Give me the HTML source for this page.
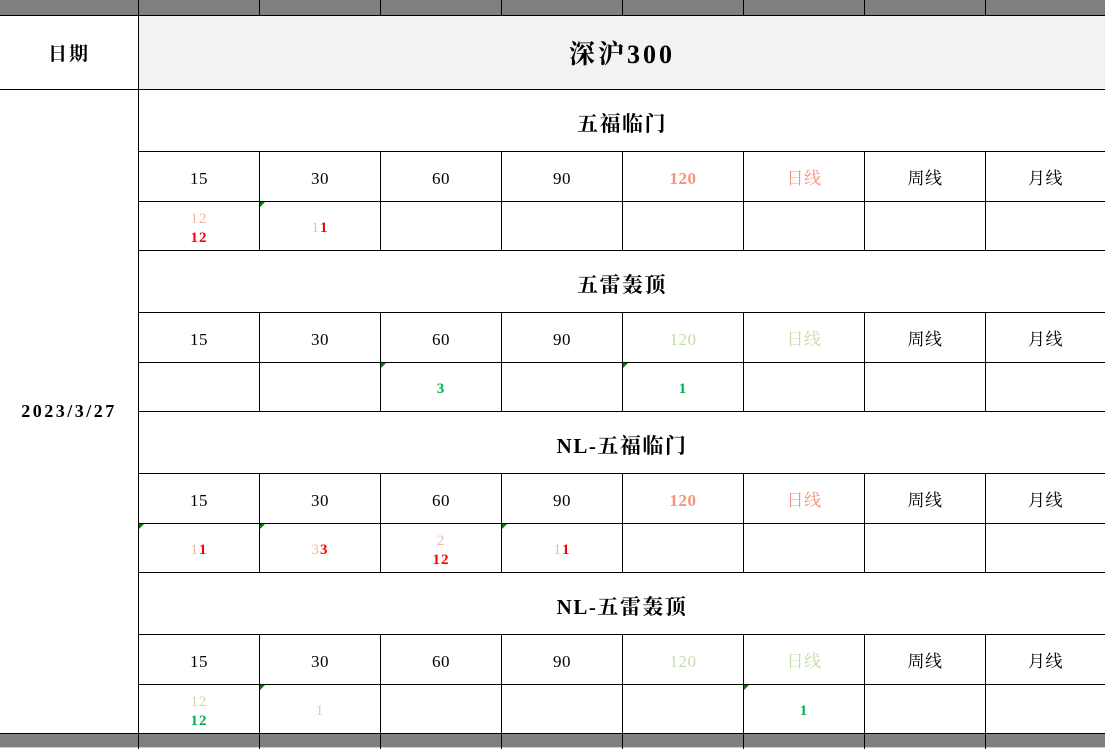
<!DOCTYPE html>
<html><head><meta charset="utf-8"><style>
*{margin:0;padding:0;box-sizing:border-box}
body{width:1105px;height:749px;background:#fff;position:relative;overflow:hidden;font-family:"Liberation Serif","Noto Serif CJK SC",serif;color:#000}
.h{position:absolute;height:1px;background:#000}
.v{position:absolute;width:1px;background:#000}
.c{position:absolute;display:flex;flex-direction:column;align-items:center;justify-content:center;text-align:center;line-height:1.25;padding-top:5px}
.lab{font-size:17px;letter-spacing:0.5px}
.val{font-size:15px;font-weight:bold;letter-spacing:1px}
.sec{font-size:21px;font-weight:bold;letter-spacing:1.5px;padding-top:8px}
.lr{color:#f8b4a0;font-weight:normal}
.r{color:#ff0000}
.sal{color:#f4937a}
.lg{color:#c5dca8;font-weight:normal}
.g{color:#00b050}
.tri{position:absolute;width:0;height:0;border-top:5px solid #007a00;border-right:5px solid transparent}
</style></head><body>
<div style="position:absolute;left:0;top:0;width:1105px;height:15px;background:#808080"></div>
<div style="position:absolute;left:0;top:733px;width:1105px;height:14px;background:#808080"></div>
<div style="position:absolute;left:139px;top:16px;width:966px;height:73px;background:#f2f2f2"></div>

<div class="h" style="left:0;top:15px;width:1105px"></div>
<div class="h" style="left:0;top:89px;width:1105px"></div>
<div class="h" style="left:138px;top:151px;width:967px"></div>
<div class="h" style="left:138px;top:201px;width:967px"></div>
<div class="h" style="left:138px;top:250px;width:967px"></div>
<div class="h" style="left:138px;top:312px;width:967px"></div>
<div class="h" style="left:138px;top:362px;width:967px"></div>
<div class="h" style="left:138px;top:411px;width:967px"></div>
<div class="h" style="left:138px;top:473px;width:967px"></div>
<div class="h" style="left:138px;top:523px;width:967px"></div>
<div class="h" style="left:138px;top:572px;width:967px"></div>
<div class="h" style="left:138px;top:634px;width:967px"></div>
<div class="h" style="left:138px;top:684px;width:967px"></div>
<div class="h" style="left:0;top:733px;width:1105px"></div>
<div class="h" style="left:0;top:747px;width:1105px;background:#ccc"></div>

<div class="v" style="left:138px;top:0;height:749px"></div>
<div class="v" style="left:259px;top:0;height:16px"></div>
<div class="v" style="left:380px;top:0;height:16px"></div>
<div class="v" style="left:501px;top:0;height:16px"></div>
<div class="v" style="left:622px;top:0;height:16px"></div>
<div class="v" style="left:743px;top:0;height:16px"></div>
<div class="v" style="left:864px;top:0;height:16px"></div>
<div class="v" style="left:985px;top:0;height:16px"></div>
<div class="v" style="left:259px;top:733px;height:16px"></div>
<div class="v" style="left:380px;top:733px;height:16px"></div>
<div class="v" style="left:501px;top:733px;height:16px"></div>
<div class="v" style="left:622px;top:733px;height:16px"></div>
<div class="v" style="left:743px;top:733px;height:16px"></div>
<div class="v" style="left:864px;top:733px;height:16px"></div>
<div class="v" style="left:985px;top:733px;height:16px"></div>
<div class="v" style="left:259px;top:151px;height:99px"></div><div class="v" style="left:380px;top:151px;height:99px"></div><div class="v" style="left:501px;top:151px;height:99px"></div><div class="v" style="left:622px;top:151px;height:99px"></div><div class="v" style="left:743px;top:151px;height:99px"></div><div class="v" style="left:864px;top:151px;height:99px"></div><div class="v" style="left:985px;top:151px;height:99px"></div>
<div class="v" style="left:259px;top:312px;height:99px"></div><div class="v" style="left:380px;top:312px;height:99px"></div><div class="v" style="left:501px;top:312px;height:99px"></div><div class="v" style="left:622px;top:312px;height:99px"></div><div class="v" style="left:743px;top:312px;height:99px"></div><div class="v" style="left:864px;top:312px;height:99px"></div><div class="v" style="left:985px;top:312px;height:99px"></div>
<div class="v" style="left:259px;top:473px;height:99px"></div><div class="v" style="left:380px;top:473px;height:99px"></div><div class="v" style="left:501px;top:473px;height:99px"></div><div class="v" style="left:622px;top:473px;height:99px"></div><div class="v" style="left:743px;top:473px;height:99px"></div><div class="v" style="left:864px;top:473px;height:99px"></div><div class="v" style="left:985px;top:473px;height:99px"></div>
<div class="v" style="left:259px;top:634px;height:99px"></div><div class="v" style="left:380px;top:634px;height:99px"></div><div class="v" style="left:501px;top:634px;height:99px"></div><div class="v" style="left:622px;top:634px;height:99px"></div><div class="v" style="left:743px;top:634px;height:99px"></div><div class="v" style="left:864px;top:634px;height:99px"></div><div class="v" style="left:985px;top:634px;height:99px"></div>

<div class="c" style="left:0;top:16px;width:138px;height:73px;font-size:19px;font-weight:bold;letter-spacing:2px">日期</div>
<div class="c" style="left:139px;top:16px;width:966px;height:73px;font-size:26px;font-weight:bold;letter-spacing:3px;padding-top:6px">深沪300</div>
<div class="c" style="left:0;top:90px;width:138px;height:643px;font-size:18px;font-weight:bold;letter-spacing:2.5px;padding-top:0">2023/3/27</div>

<div class="c sec" style="left:139px;top:90px;width:966px;height:61px">五福临门</div>
<div class="c lab" style="left:139px;top:152px;width:120px;height:49px">15</div>
<div class="c lab" style="left:260px;top:152px;width:120px;height:49px">30</div>
<div class="c lab" style="left:381px;top:152px;width:120px;height:49px">60</div>
<div class="c lab" style="left:502px;top:152px;width:120px;height:49px">90</div>
<div class="c lab sal" style="left:623px;top:152px;width:120px;height:49px;font-weight:bold">120</div>
<div class="c lab sal" style="left:744px;top:152px;width:120px;height:49px">日线</div>
<div class="c lab" style="left:865px;top:152px;width:120px;height:49px">周线</div>
<div class="c lab" style="left:986px;top:152px;width:119px;height:49px">月线</div>
<div class="c val" style="left:139px;top:202px;width:120px;height:48px"><span class="lr">12</span><span class="r">12</span></div>
<div class="c val" style="left:260px;top:202px;width:120px;height:48px"><span><span class="lr">1</span><span class="r">1</span></span></div>
<div class="tri" style="left:260px;top:202px"></div>

<div class="c sec" style="left:139px;top:251px;width:966px;height:61px">五雷轰顶</div>
<div class="c lab" style="left:139px;top:313px;width:120px;height:49px">15</div>
<div class="c lab" style="left:260px;top:313px;width:120px;height:49px">30</div>
<div class="c lab" style="left:381px;top:313px;width:120px;height:49px">60</div>
<div class="c lab" style="left:502px;top:313px;width:120px;height:49px">90</div>
<div class="c lab lg" style="left:623px;top:313px;width:120px;height:49px">120</div>
<div class="c lab lg" style="left:744px;top:313px;width:120px;height:49px">日线</div>
<div class="c lab" style="left:865px;top:313px;width:120px;height:49px">周线</div>
<div class="c lab" style="left:986px;top:313px;width:119px;height:49px">月线</div>
<div class="c val g" style="left:381px;top:363px;width:120px;height:48px">3</div>
<div class="c val g" style="left:623px;top:363px;width:120px;height:48px">1</div>
<div class="tri" style="left:381px;top:363px"></div>
<div class="tri" style="left:623px;top:363px"></div>

<div class="c sec" style="left:139px;top:412px;width:966px;height:61px">NL-五福临门</div>
<div class="c lab" style="left:139px;top:474px;width:120px;height:49px">15</div>
<div class="c lab" style="left:260px;top:474px;width:120px;height:49px">30</div>
<div class="c lab" style="left:381px;top:474px;width:120px;height:49px">60</div>
<div class="c lab" style="left:502px;top:474px;width:120px;height:49px">90</div>
<div class="c lab sal" style="left:623px;top:474px;width:120px;height:49px;font-weight:bold">120</div>
<div class="c lab sal" style="left:744px;top:474px;width:120px;height:49px">日线</div>
<div class="c lab" style="left:865px;top:474px;width:120px;height:49px">周线</div>
<div class="c lab" style="left:986px;top:474px;width:119px;height:49px">月线</div>
<div class="c val" style="left:139px;top:524px;width:120px;height:48px"><span><span class="lr">1</span><span class="r">1</span></span></div>
<div class="c val" style="left:260px;top:524px;width:120px;height:48px"><span><span class="lr">3</span><span class="r">3</span></span></div>
<div class="c val" style="left:381px;top:524px;width:120px;height:48px"><span class="lr">2</span><span class="r">12</span></div>
<div class="c val" style="left:502px;top:524px;width:120px;height:48px"><span><span class="lr">1</span><span class="r">1</span></span></div>
<div class="tri" style="left:139px;top:524px"></div>
<div class="tri" style="left:260px;top:524px"></div>
<div class="tri" style="left:502px;top:524px"></div>

<div class="c sec" style="left:139px;top:573px;width:966px;height:61px">NL-五雷轰顶</div>
<div class="c lab" style="left:139px;top:635px;width:120px;height:49px">15</div>
<div class="c lab" style="left:260px;top:635px;width:120px;height:49px">30</div>
<div class="c lab" style="left:381px;top:635px;width:120px;height:49px">60</div>
<div class="c lab" style="left:502px;top:635px;width:120px;height:49px">90</div>
<div class="c lab lg" style="left:623px;top:635px;width:120px;height:49px">120</div>
<div class="c lab lg" style="left:744px;top:635px;width:120px;height:49px">日线</div>
<div class="c lab" style="left:865px;top:635px;width:120px;height:49px">周线</div>
<div class="c lab" style="left:986px;top:635px;width:119px;height:49px">月线</div>
<div class="c val" style="left:139px;top:685px;width:120px;height:48px"><span class="lg">12</span><span class="g">12</span></div>
<div class="c val lg" style="left:260px;top:685px;width:120px;height:48px">1</div>
<div class="c val g" style="left:744px;top:685px;width:120px;height:48px">1</div>
<div class="tri" style="left:260px;top:685px"></div>
<div class="tri" style="left:744px;top:685px"></div>
</body></html>
